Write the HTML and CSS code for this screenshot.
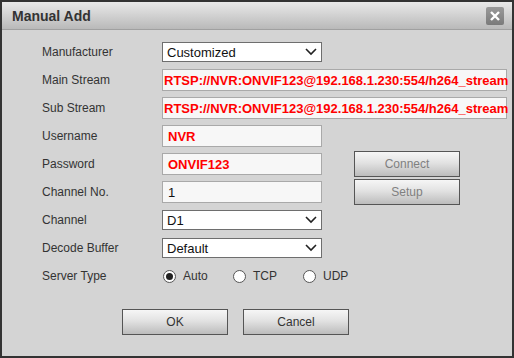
FILE: index.html
```html
<!DOCTYPE html>
<html lang="en">
<head>
    <meta charset="UTF-8">
    <title>Manual Add</title>
    <link rel="stylesheet" href="styles.css">
</head>
<body>
    <div class="dialog">
        <header class="titlebar">
            <h1>Manual Add</h1>
            <div class="close">
                <svg width="12" height="12" viewBox="0 0 12 12"><path d="M2 2 L10 10 M10 2 L2 10" stroke="#fff" stroke-width="2.4"/></svg>
            </div>
        </header>

        <main class="form">
            <div class="row">
                <label>Manufacturer</label>
                <div class="select"><span>Customized</span><svg width="12" height="8" viewBox="0 0 12 8"><path d="M1 1 L6 6 L11 1" fill="none" stroke="#222" stroke-width="1.6"/></svg></div>
            </div>
            <div class="row">
                <label>Main Stream</label>
                <div class="input wide red">RTSP://NVR:ONVIF123@192.168.1.230:554/h264_stream</div>
            </div>
            <div class="row">
                <label>Sub Stream</label>
                <div class="input wide red">RTSP://NVR:ONVIF123@192.168.1.230:554/h264_stream</div>
            </div>
            <div class="row">
                <label>Username</label>
                <div class="input red">NVR</div>
            </div>
            <div class="row">
                <label>Password</label>
                <div class="input red">ONVIF123</div>
                <button class="btn side disabled">Connect</button>
            </div>
            <div class="row">
                <label>Channel No.</label>
                <div class="input">1</div>
                <button class="btn side disabled">Setup</button>
            </div>
            <div class="row">
                <label>Channel</label>
                <div class="select"><span>D1</span><svg width="12" height="8" viewBox="0 0 12 8"><path d="M1 1 L6 6 L11 1" fill="none" stroke="#222" stroke-width="1.6"/></svg></div>
            </div>
            <div class="row">
                <label>Decode Buffer</label>
                <div class="select"><span>Default</span><svg width="12" height="8" viewBox="0 0 12 8"><path d="M1 1 L6 6 L11 1" fill="none" stroke="#222" stroke-width="1.6"/></svg></div>
            </div>
            <div class="row">
                <label>Server Type</label>
                <div class="radios">
                    <span class="radio checked"><i></i>Auto</span>
                    <span class="radio"><i></i>TCP</span>
                    <span class="radio"><i></i>UDP</span>
                </div>
            </div>

            <div class="footer">
                <button class="btn">OK</button>
                <button class="btn">Cancel</button>
            </div>
        </main>
    </div>
</body>
</html>
```

FILE: styles.css
```css
* {
    margin: 0;
    padding: 0;
    box-sizing: border-box;
    font-family: "Liberation Sans", Arial, sans-serif;
}

body {
    width: 514px;
    height: 358px;
    overflow: hidden;
    background-color: #333;
}

.dialog {
    width: 514px;
    height: 358px;
    border: 2px solid #333;
    background-color: #d4d4d4;
}

.titlebar {
    height: 28px;
    display: flex;
    align-items: center;
    justify-content: space-between;
    padding: 0 8px 0 10px;
    background: linear-gradient(#e9e9e9, #b9b9b9);
    border-bottom: 1px solid #a0a0a0;
}

.titlebar h1 {
    font-size: 14px;
    font-weight: bold;
    color: #333;
}

.close {
    width: 18px;
    height: 18px;
    border-radius: 2px;
    background: linear-gradient(#9a9a9a, #7a7a7a);
    display: flex;
    align-items: center;
    justify-content: center;
}

.form {
    padding: 8px 0 0 40px;
}

.row {
    height: 28px;
    display: flex;
    align-items: center;
}

.row label {
    width: 120px;
    font-size: 12px;
    color: #333;
}

.input {
    width: 160px;
    height: 22px;
    padding: 0 5px;
    display: flex;
    align-items: center;
    background-color: #f7f7f7;
    border: 1px solid #a9a9a9;
    font-size: 13px;
    color: #111;
}

.input.wide {
    width: 345px;
    padding: 0 1px;
}

.red {
    color: #f00;
    font-weight: bold;
}

.select {
    width: 160px;
    height: 20px;
    padding: 0 4px 0 4px;
    display: flex;
    align-items: center;
    justify-content: space-between;
    background-color: #fff;
    border: 1px solid #6e6e6e;
    font-size: 13px;
    color: #111;
}

.btn {
    width: 106px;
    height: 26px;
    border: 1px solid #555;
    background: linear-gradient(#f6f6f6 0%, #e2e2e2 45%, #bcbcbc 100%);
    font-size: 12px;
    color: #333;
}

.btn.side {
    margin-left: 32px;
}

.btn.disabled {
    color: #808080;
}

.radios {
    display: flex;
}

.radio {
    width: 70px;
    display: flex;
    align-items: center;
    font-size: 12px;
    color: #333;
}

.radio i {
    width: 13px;
    height: 13px;
    margin: 0 7px 0 1px;
    border-radius: 50%;
    border: 1px solid #555;
    background-color: #fff;
    display: flex;
    align-items: center;
    justify-content: center;
}

.radio.checked i::after {
    content: "";
    width: 7px;
    height: 7px;
    border-radius: 50%;
    background-color: #222;
}

.footer {
    display: flex;
    gap: 15px;
    padding: 19px 0 0 80px;
}
```
